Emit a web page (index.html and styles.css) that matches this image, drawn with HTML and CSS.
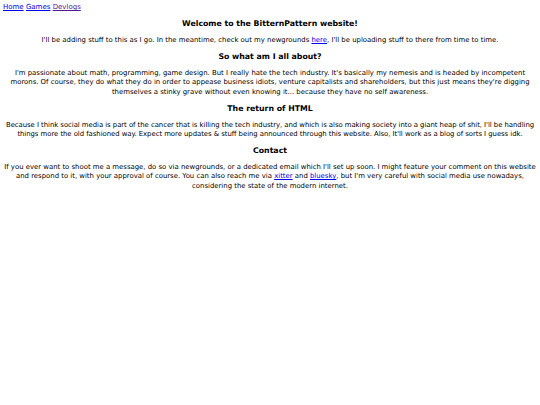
FILE: index.html
```html
<!DOCTYPE html>
<html>
<head>
<meta charset="utf-8">
<link rel="stylesheet" href="styles.css">
</head>
<body>
<nav class="nav"><a href="#">Home</a> <a href="#">Games</a> <a href="#" class="visited">Devlogs</a></nav>
<main class="content">
<h3 class="title">Welcome to the BitternPattern website!</h3>
<p class="text">I'll be adding stuff to this as I go. In the meantime, check out my newgrounds <a href="#">here</a>, I'll be uploading stuff to there from time to time.</p>
<h3 class="title">So what am I all about?</h3>
<p class="text">I'm passionate about math, programming, game design. But I really hate the tech industry. It's basically my nemesis and is headed by incompetent morons. Of course, they do what they do in order to appease business idiots, venture capitalists and shareholders, but this just means they're digging themselves a stinky grave without even knowing it... because they have no self awareness.</p>
<h3 class="title">The return of HTML</h3>
<p class="text tight">Because I think social media is part of the cancer that is killing the tech industry, and which is also making society into a giant heap of shit, I'll be handling things more the old fashioned way. Expect more updates &amp; stuff being announced through this website. Also, It'll work as a blog of sorts I guess idk.</p>
<h3 class="title">Contact</h3>
<p class="text">If you ever want to shoot me a message, do so via newgrounds, or a dedicated email which I'll set up soon. I might feature your comment on this website and respond to it, with your approval of course. You can also reach me via <a href="#">xitter</a> and <a href="#">bluesky</a>, but I'm very careful with social media use nowadays, considering the state of the modern internet.</p>
</main>
</body>
</html>
```
FILE: styles.css
```css
html, body { background: #fff; }
body {
  margin: 3px 1px;
  font-family: "DejaVu Sans", Verdana, sans-serif;
  font-size: 6.9px;
  color: #000;
}
a { color: #0000ee; }
a.visited { color: #551a8b; }
.nav { font-size: 7px; line-height: 9px; margin-bottom: 1.5px; padding-left: 2px; }
.content { text-align: center; }
.title { font-size: 7.8px; line-height: 10px; font-weight: bold; margin: 7px 0; }
.text { margin: 0; line-height: 9.2px; }
.tight { letter-spacing: -0.045px; }
```
